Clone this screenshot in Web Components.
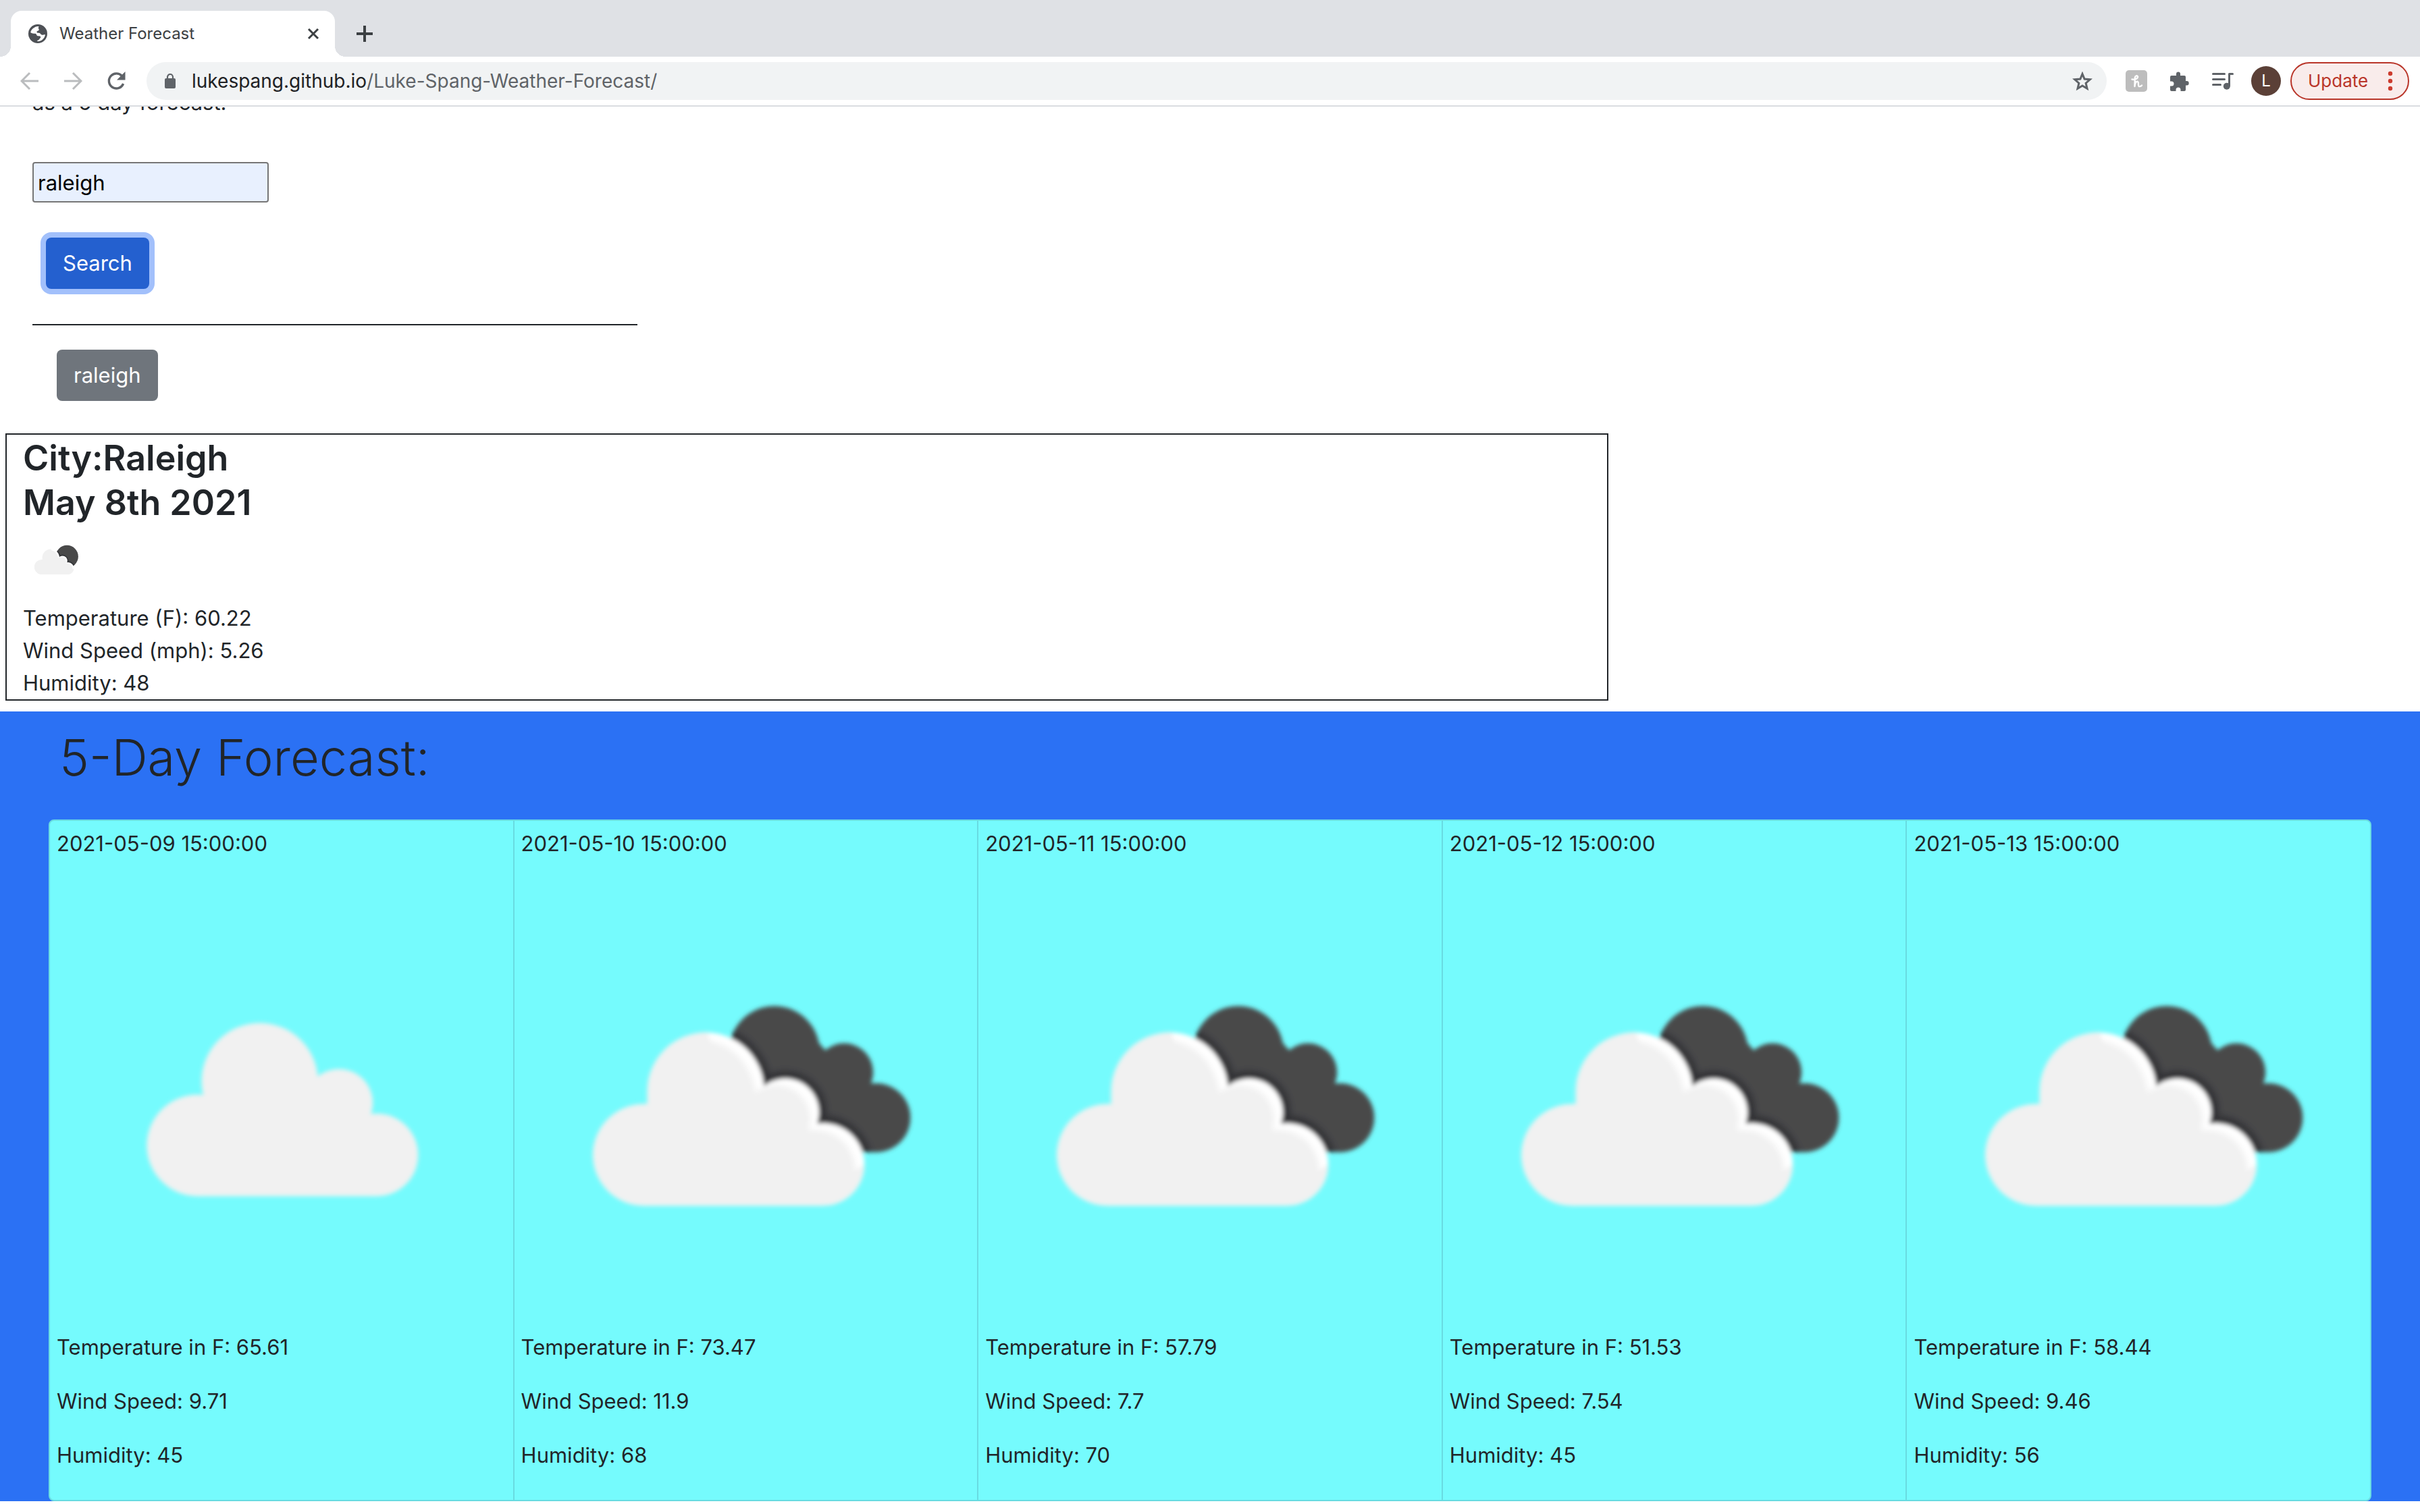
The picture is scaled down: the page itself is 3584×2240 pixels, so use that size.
<!DOCTYPE html>
<html lang="en">
<head>
<meta charset="utf-8">
<title>Weather Forecast</title>
<style>
  body { margin: 0; background: #fff; color: #212529; font: 400 31px/48px Inter, "Liberation Sans", sans-serif; }
</style>
</head>
<body>
<browser-window>
  <browser-tab slot="tabs">Weather Forecast</browser-tab>
  <browser-toolbar slot="toolbar">
    <span slot="host">lukespang.github.io</span><span slot="path">/Luke-Spang-Weather-Forecast/</span>
  </browser-toolbar>
  <search-panel city="raleigh">as a 5 day forecast.</search-panel>
  <current-weather icon="few">
    <span slot="city">City:Raleigh</span>
    <span slot="date">May 8th 2021</span>
    <span slot="temp">Temperature (F): 60.22</span>
    <span slot="wind">Wind Speed (mph): 5.26</span>
    <span slot="humidity">Humidity: 48</span>
  </current-weather>
  <forecast-section>
    <span slot="title">5-Day Forecast:</span>
    <forecast-card date="2021-05-09 15:00:00" icon="scattered" temp="65.61" wind="9.71" humidity="45"></forecast-card>
    <forecast-card date="2021-05-10 15:00:00" icon="broken" temp="73.47" wind="11.9" humidity="68"></forecast-card>
    <forecast-card date="2021-05-11 15:00:00" icon="broken" temp="57.79" wind="7.7" humidity="70"></forecast-card>
    <forecast-card date="2021-05-12 15:00:00" icon="broken" temp="51.53" wind="7.54" humidity="45"></forecast-card>
    <forecast-card date="2021-05-13 15:00:00" icon="broken" temp="58.44" wind="9.46" humidity="56"></forecast-card>
  </forecast-section>
</browser-window>

<script>
const define = (name, render) => customElements.define(name, class extends HTMLElement {
  connectedCallback() {
    if (this.shadowRoot) return;
    this.attachShadow({ mode: "open" }).innerHTML = render(this);
  }
});

define("browser-window", () => `
  <style>
    :host { display: flex; flex-direction: column; }
    .strip { display: flex; align-items: flex-end; height: 84px; padding-left: 16px; background: #dfe1e5; }
    .new { display: grid; place-items: center; width: 56px; height: 68px; margin-left: 16px; padding: 0; border: 0; background: none; }
    main { display: flow-root; overflow: hidden; }
  </style>
  <div class="strip">
    <slot name="tabs"></slot>
    <button class="new" aria-label="New tab">
      <svg width="26" height="26" viewBox="0 0 26 26" stroke="#3c4043" stroke-width="4"><path d="M13 1v24M1 13h24"/></svg>
    </button>
  </div>
  <slot name="toolbar"></slot>
  <main><slot></slot></main>`);

define("browser-tab", () => `
  <style>
    :host { display: flex; align-items: center; position: relative; box-sizing: border-box; width: 480px; height: 68px; padding: 0 16px 0 26px; background: #fff; border-radius: 16px 16px 0 0; color: #3c4043; font-size: 24px; line-height: 32px; }
    :host::before, :host::after { content: ""; position: absolute; bottom: 0; width: 16px; height: 16px; }
    :host::before { left: -16px; background: radial-gradient(circle at 0 0, transparent 16px, #fff 16px); }
    :host::after { right: -16px; background: radial-gradient(circle at 100% 0, transparent 16px, #fff 16px); }
    span { flex: 1; padding-left: 18px; }
    button { display: grid; place-items: center; width: 32px; height: 32px; padding: 0; border: 0; background: none; }
  </style>
  <svg width="28" height="28" viewBox="0 0 28 28"><circle cx="14" cy="14" r="14" fill="#4e5156"/>
    <path d="M15.500 3C11 2.500 4.500 6 3.200 12c1.800 1.800 4.500 1.500 7.300 1.800 2 .5 1.200 3 3.500 3.400 2 .4 3.600-.2 4.200 1.200.3 2-1.400 2.300-2 3.800-.6 1.300-2.700.9-3.400 2.800C18 26 24 22 25 15.500c-1.500-.8-2.500.5-4.500.3-2.300-.4-2.500-2.500-4.700-3-1.600-.4-3.300.2-3.300-1.400 0-1.900 2.700-1.200 3.200-2.800.5-1.600-1-2-.9-3.400.1-1 .5-1.600.7-2.200z" fill="#fff"/>
  </svg>
  <span><slot></slot></span>
  <button aria-label="Close tab"><svg width="18" height="18" viewBox="0 0 18 18" stroke="#3c4043" stroke-width="3"><path d="M2 2l14 14M16 2L2 16"/></svg></button>`);

define("browser-toolbar", () => `
  <style>
    :host { display: flex; align-items: center; height: 72px; padding-right: 16px; border-bottom: 2px solid #dadce0; background: #fff; font-size: 28px; line-height: 40px; }
    button { display: grid; place-items: center; flex: none; width: 64px; height: 56px; padding: 0; border: 0; background: none; font: inherit; }
    nav { display: flex; width: 217px; padding-left: 12px; box-sizing: border-box; }
    .omni { flex: 1; display: flex; align-items: center; height: 56px; padding: 0 0 0 27px; border-radius: 28px; background: #f1f3f4; }
    .url { flex: 1; padding-left: 24px; color: #5f6368; white-space: nowrap; }
    .url .host { color: #202124; }
    .omni button { width: 72px; }
    .tools { display: flex; margin-left: 12px; }
    .avatar { display: grid; place-items: center; width: 44px; height: 44px; border-radius: 50%; background: #5b4037; color: #fff; font-size: 24px; line-height: 44px; }
    .update { display: flex; align-items: center; justify-content: space-between; width: 176px; margin-left: 4px; padding: 0 22px 0 24px; box-sizing: border-box; border: 2px solid #b93529; border-radius: 28px; background: #f9eceb; color: #b93529; font-size: 26px; }
  </style>
  <nav>
    <button aria-label="Back"><svg width="28" height="28" viewBox="0 0 28 28" fill="none" stroke="#babcbe" stroke-width="3"><path d="M27 14H3M14 2L2 14l12 12"/></svg></button>
    <button aria-label="Forward"><svg width="28" height="28" viewBox="0 0 28 28" fill="none" stroke="#babcbe" stroke-width="3"><path d="M1 14h24M14 2l12 12-12 12"/></svg></button>
    <button aria-label="Reload"><svg width="28" height="28" viewBox="0 0 28 28"><path d="M22.500 6.500A11 11 0 1 0 24.600 18" fill="none" stroke="#5f6368" stroke-width="3.400"/><path d="M27.500 0v12.500H15z" fill="#5f6368"/></svg></button>
  </nav>
  <div class="omni">
    <svg width="16" height="22" viewBox="0 0 16 22"><rect y="7" width="16" height="15" rx="2" fill="#5f6368"/><path d="M4 8V5a4 4 0 0 1 8 0v3" fill="none" stroke="#5f6368" stroke-width="2.200"/></svg>
    <div class="url" role="textbox" aria-label="Address"><span class="host"><slot name="host"></slot></span><slot name="path"></slot></div>
    <button aria-label="Bookmark this page"><svg width="30" height="29" viewBox="0 0 30 29"><path d="M15 3.500l3.100 7.600 8.200.7-6.200 5.400 1.900 8-7-4.300-7 4.300 1.900-8-6.200-5.400 8.200-.7z" fill="none" stroke="#5f6368" stroke-width="3"/></svg></button>
  </div>
  <div class="tools">
    <button aria-label="Honey"><svg width="32" height="32" viewBox="0 0 32 32"><rect width="32" height="32" rx="5" fill="#bdbdbd"/><path d="M9.500 13.500C14 14.500 18.500 12 18 9.500c-.4-2-3.800-1.400-4.200 1.500L13.500 24c.3-3.500 1.500-7.500 4-7.300 2.700.3.300 6.800 2.500 7.300 1.500.3 3-.3 4-1.500" fill="none" stroke="#fff" stroke-width="2.400" stroke-linecap="round" stroke-linejoin="round"/></svg></button>
    <button aria-label="Extensions"><svg width="29" height="29" viewBox="0 0 29 29"><path d="M9 6V3.500a3 3 0 0 1 6 0V6h6a2 2 0 0 1 2 2v6h1.500a3.200 3.200 0 0 1 0 6.400H23V27a2 2 0 0 1-2 2h-5.500v-2a3.500 3.500 0 0 0-7 0v2H2a2 2 0 0 1-2-2v-5.500h2a3.500 3.500 0 0 0 0-7H0V8a2 2 0 0 1 2-2z" fill="#5f6368"/></svg></button>
    <button aria-label="Media controls"><svg width="32" height="26" viewBox="0 0 32 26" fill="none" stroke="#5f6368" stroke-width="3" stroke-linecap="round" stroke-linejoin="round"><path d="M1.500 2.500h17M1.500 10.500h17M1.500 18.500h11M30.500 2.500h-5V20"/><circle cx="21.800" cy="20.800" r="5" fill="#5f6368" stroke="none"/></svg></button>
    <button aria-label="Profile"><span class="avatar">L</span></button>
    <button class="update">Update<svg width="8" height="32" viewBox="0 0 8 32" fill="#cc3b2d"><circle cx="4" cy="5" r="3.200"/><circle cx="4" cy="16" r="3.200"/><circle cx="4" cy="27" r="3.200"/></svg></button>
  </div>`);

define("search-panel", host => `
  <style>
    :host { display: flex; flex-direction: column; align-items: flex-start; box-sizing: border-box; margin-top: -30px; padding-left: 48px; }
    p { margin: 0 0 64px; }
    input { box-sizing: border-box; width: 350px; height: 60px; padding: 0 6px; border: 2px solid #767676; border-radius: 4px; background: #e8f0fe; color: #000; font: inherit; }
    button { height: 76px; padding: 0 25px; border: 0; border-radius: 8px; background: #6f757c; color: #fff; font: inherit; }
    .search { margin: 52px 0 52px 20px; background: #2460cf; box-shadow: 0 0 0 8px #a2c0fb; }
    hr { width: 896px; max-width: 100%; height: 2px; margin: 0; border: 0; background: #212529; }
    .recent { margin: 36px 0 48px 36px; }
  </style>
  <p><slot></slot></p>
  <input type="text" aria-label="City" value="${host.getAttribute("city")}">
  <button class="search">Search</button>
  <hr>
  <button class="recent">${host.getAttribute("city")}</button>`);

const CLOUD = `<circle cx="218" cy="410" r="75"/><circle cx="310" cy="315" r="86"/><circle cx="427" cy="347" r="50"/><circle cx="483" cy="424" r="61"/><path d="M218 410L310 316L427 347L483 424V485H218z"/>`;
const BACK = {
  few: `<circle cx="446" cy="318" r="114"/>`,
  broken: `<circle cx="384" cy="271" r="67"/><circle cx="487" cy="302" r="43"/><circle cx="534" cy="369" r="51"/><path d="M340 320L384 271L450 259L487 300L530 324L534 420H440z"/>`
};

define("weather-icon", host => {
  const back = BACK[host.getAttribute("name")];
  const art = back ? `
    <clipPath id="back">${back}</clipPath>
    <clipPath id="front">${CLOUD}</clipPath>
    <g fill="#48484a">${back}</g>
    <g clip-path="url(#back)"><g transform="translate(-27 14)" fill="#303335" stroke="#303335" stroke-width="22" filter="url(#soft)">${CLOUD}</g></g>
    <g transform="translate(-27 14)">
      <g fill="#fff">${CLOUD}</g>
      <g fill="#f1f1f1">
        <g clip-path="url(#front)"><g transform="translate(-13 10)" filter="url(#soft)">${CLOUD}</g></g>
        <path d="M143 410A75 75 0 0 1 223 335V316A87 87 0 0 1 312 229L340 320L520 440L544 424A61 61 0 0 1 483 485H218A75 75 0 0 1 143 410z"/>
      </g>
    </g>` : `<g fill="#f1f1f1">${CLOUD}</g>`;
  return `
  <style>:host { display: block; } svg { display: block; width: 100%; height: auto; }</style>
  <svg viewBox="0 0 684 684" role="img" aria-label="Clouds">
    <filter id="soft"><feGaussianBlur stdDeviation="3"/></filter>
    <g filter="url(#soft)">${art}</g>
  </svg>`;
});

define("current-weather", host => `
  <style>
    :host { display: block; box-sizing: border-box; width: calc(66.6667% - 15px); margin: 0 8px 16px; padding: 2px 0 0 24px; border: 2px solid #212529; }
    h2 { margin: 0; font-size: 52px; line-height: 66px; font-weight: 600; }
    weather-icon { width: 100px; margin-bottom: 14px; }
    p { margin: 0; }
  </style>
  <h2><slot name="city"></slot></h2>
  <h2><slot name="date"></slot></h2>
  <weather-icon name="${host.getAttribute("icon")}"></weather-icon>
  <p><slot name="temp"></slot></p>
  <p><slot name="wind"></slot></p>
  <p><slot name="humidity"></slot></p>`);

define("forecast-section", () => `
  <style>
    :host { display: block; padding: 20px 72px 0; background: #2b71f4; }
    h1 { margin: 0 0 44px; padding-left: 16px; font-size: 74px; line-height: 96px; font-weight: 300; }
    .cards { display: flex; overflow: hidden; border: 2px solid #68dbe1; border-radius: 8px; background: #75fbfd; }
  </style>
  <h1><slot name="title"></slot></h1>
  <div class="cards"><slot></slot></div>`);

define("forecast-card", host => `
  <style>
    :host { display: block; flex: 1 1 0; box-sizing: border-box; padding: 10px 0 42px; border-right: 2px solid #68dbe1; }
    :host(:last-child) { border-right: 0; }
    p { margin: 0 0 32px; padding-left: 10px; }
    .date { margin-bottom: 12px; }
    p:last-child { margin-bottom: 0; }
  </style>
  <p class="date">${host.getAttribute("date")}</p>
  <weather-icon name="${host.getAttribute("icon")}"></weather-icon>
  <p>Temperature in F: ${host.getAttribute("temp")}</p>
  <p>Wind Speed: ${host.getAttribute("wind")}</p>
  <p>Humidity: ${host.getAttribute("humidity")}</p>`);
</script>
</body>
</html>
